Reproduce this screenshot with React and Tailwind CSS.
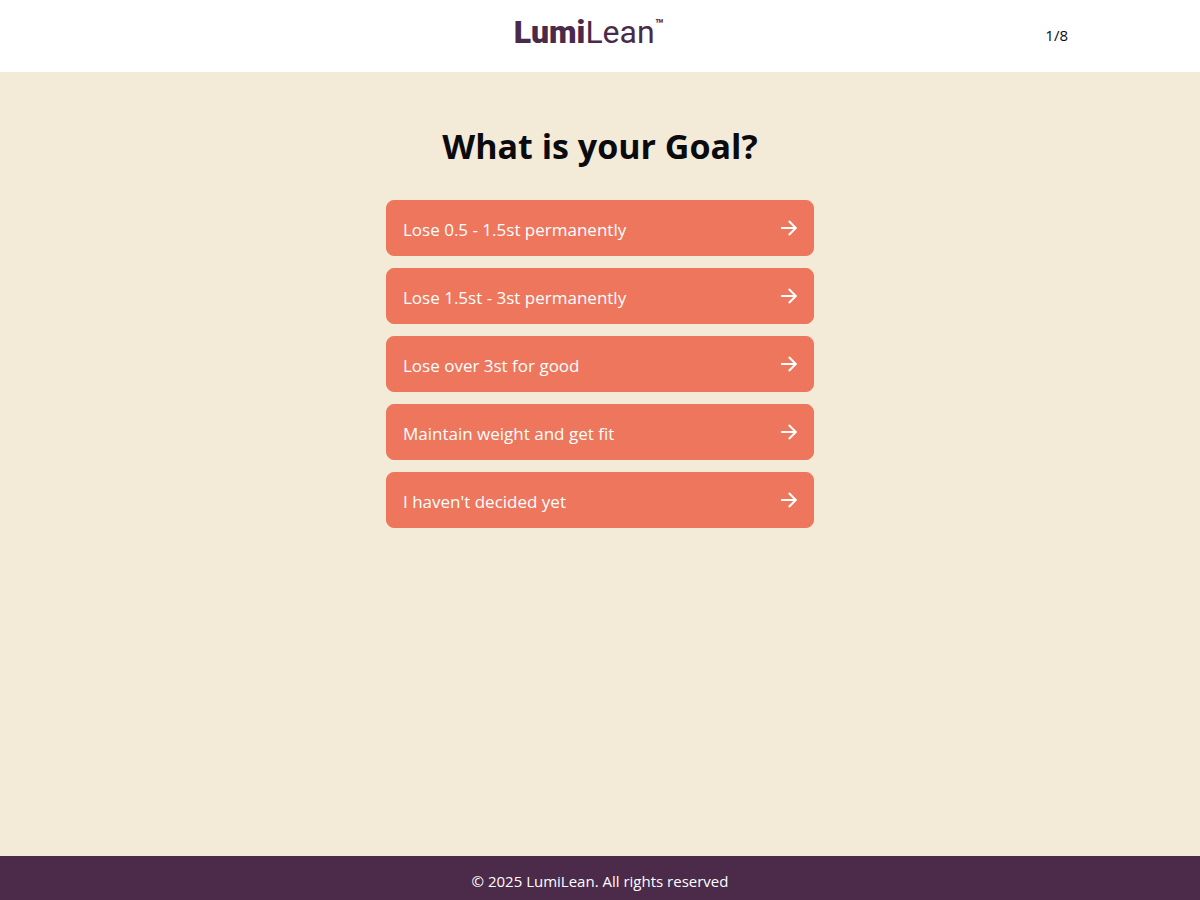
const GOALS = [
  'Lose 0.5 - 1.5st permanently',
  'Lose 1.5st - 3st permanently',
  'Lose over 3st for good',
  'Maintain weight and get fit',
  "I haven't decided yet",
];

const ArrowIcon = () => (
  <svg viewBox="0 0 18 18" className="w-[18px] h-[18px] shrink-0" fill="none" stroke="currentColor" strokeWidth="2" aria-hidden="true">
    <path d="M2 9h15M9.8 2 16.8 9l-7 7" />
  </svg>
);

const Logo = () => (
  <a href="#" aria-label="LumiLean" className="inline-flex items-start text-[#4a294a] font-['Roboto',sans-serif] leading-9">
    <span className="text-[32px] font-black">Lumi</span>
    <span className="text-[32px] font-normal">Lean</span>
    <span className="text-[14px] font-bold leading-5">™</span>
  </a>
);

const GoalButton = ({ label }) => (
  <button
    type="button"
    className="flex w-full h-14 items-center justify-between rounded-lg border border-[#ee765c] bg-[#ee765c] px-4 text-left text-[17px] text-white cursor-pointer hover:bg-[#e5694e]"
  >
    <span className="pt-1">{label}</span>
    <ArrowIcon />
  </button>
);

export default function App() {
  return (
    <div className="flex min-h-screen flex-col bg-[#f3ead7] font-['Segoe_UI','Open_Sans',sans-serif] text-[#0a0a0f]">
      <header className="bg-white">
        <div className="mx-auto flex h-[72px] w-full max-w-[960px] items-center px-3">
          <div className="flex flex-1 justify-center pb-2">
            <Logo />
          </div>
          <span className="pb-0.5 text-[15px]">1/8</span>
        </div>
      </header>

      <main className="mx-auto w-full max-w-[452px] flex-1 px-3 pt-12 pb-12">
        <h1 className="text-center text-[34px] leading-[52px] font-bold">What is your Goal?</h1>
        <div className="mt-7 flex flex-col gap-3">
          {GOALS.map((goal) => (
            <GoalButton key={goal} label={goal} />
          ))}
        </div>
      </main>

      <footer className="bg-[#4b2a4a] px-3 pt-3 pb-1.5 text-center text-[15px] leading-[26px] text-white">
        © 2025 LumiLean. All rights reserved
      </footer>
    </div>
  );
}
